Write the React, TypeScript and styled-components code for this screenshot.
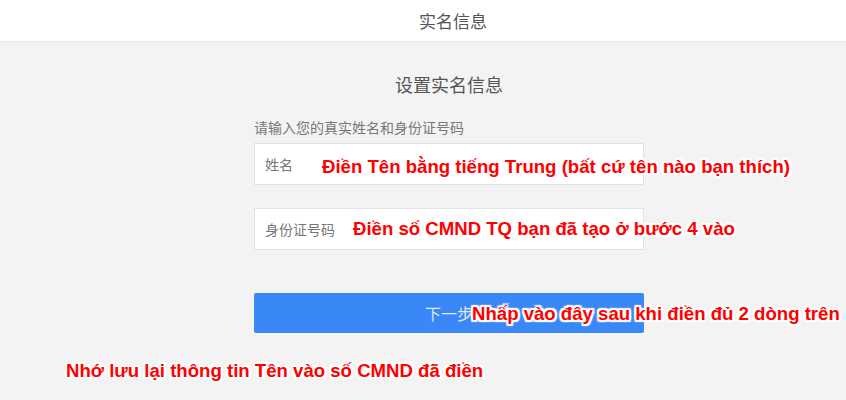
import React from 'react'
import styled, { createGlobalStyle } from 'styled-components'

const GlobalStyle = createGlobalStyle`
  html, body {
    margin: 0;
    padding: 0;
    background: #f3f3f3;
    font-family: "Noto Sans CJK SC", "Liberation Sans", sans-serif;
  }
`

interface NoteProps {
  x: number;
  y: number;
}

const notes = [
  { text: 'Điền Tên bằng tiếng Trung (bất cứ tên nào bạn thích)', x: 322, y: 155 },
  { text: 'Điền số CMND TQ bạn đã tạo ở bước 4 vào', x: 353, y: 217 },
  { text: 'Nhấp vào đây sau khi điền đủ 2 dòng trên', x: 472, y: 302 },
  { text: 'Nhớ lưu lại thông tin Tên vào số CMND đã điền', x: 66, y: 359 },
]

const App = () => {
  return (
    <Page>
      <GlobalStyle />
      <Header>
        <HeaderTitle>实名信息</HeaderTitle>
      </Header>
      <Form>
        <Heading>设置实名信息</Heading>
        <Hint>请输入您的真实姓名和身份证号码</Hint>
        <Field>
          <FieldLabel>姓名</FieldLabel>
        </Field>
        <Field>
          <FieldLabel>身份证号码</FieldLabel>
        </Field>
        <NextButton>下一步</NextButton>
      </Form>
      {notes.map((n) => (
        <Note key={n.text} x={n.x} y={n.y}>{n.text}</Note>
      ))}
    </Page>
  )
}

const Page = styled.div`
  position: relative;
  width: 846px;
  height: 400px;
  overflow: hidden;
  background: #f3f3f3;
`

const Header = styled.div`
  height: 42px;
  background: #fff;
  border-bottom: 1px solid #e6e6e6;
  display: flex;
  align-items: center;
  justify-content: center;
  padding-left: 60px;
  box-sizing: border-box;
`

const HeaderTitle = styled.span`
  font-size: 17px;
  color: #555;
`

const Form = styled.div`
  width: 390px;
  margin-left: 254px;
  display: flex;
  flex-direction: column;
`

const Heading = styled.div`
  margin-top: 29px;
  text-align: center;
  font-size: 18px;
  color: #555;
  line-height: 26px;
`

const Hint = styled.div`
  margin-top: 21px;
  font-size: 14px;
  color: #777;
  line-height: 19px;
`

const Field = styled.div`
  margin-top: 6px;
  height: 42px;
  background: #fff;
  border: 1px solid #e2e2e2;
  box-sizing: border-box;
  display: flex;
  align-items: center;
  padding-left: 10px;

  & + & {
    margin-top: 23px;
  }
`

const FieldLabel = styled.span`
  font-size: 14px;
  color: #777;
`

const NextButton = styled.div`
  margin-top: 43px;
  height: 40px;
  background: #3a87f7;
  border-radius: 2px;
  color: #dce9ff;
  font-size: 16px;
  display: flex;
  align-items: center;
  justify-content: center;
`

const Note = styled.div<NoteProps>`
  position: absolute;
  left: ${({ x }) => x}px;
  top: ${({ y }) => y}px;
  white-space: nowrap;
  font-family: "Liberation Sans", Arial, sans-serif;
  font-weight: bold;
  font-size: 18.6px;
  line-height: 24px;
  color: #f00;
  text-shadow:
    0 0 3px #fff, 2px 0 1px #fff, -2px 0 1px #fff, 0 2px 1px #fff, 0 -2px 1px #fff,
    2px 2px 1px #fff, -2px -2px 1px #fff, 2px -2px 1px #fff, -2px 2px 1px #fff;
`

export default App
